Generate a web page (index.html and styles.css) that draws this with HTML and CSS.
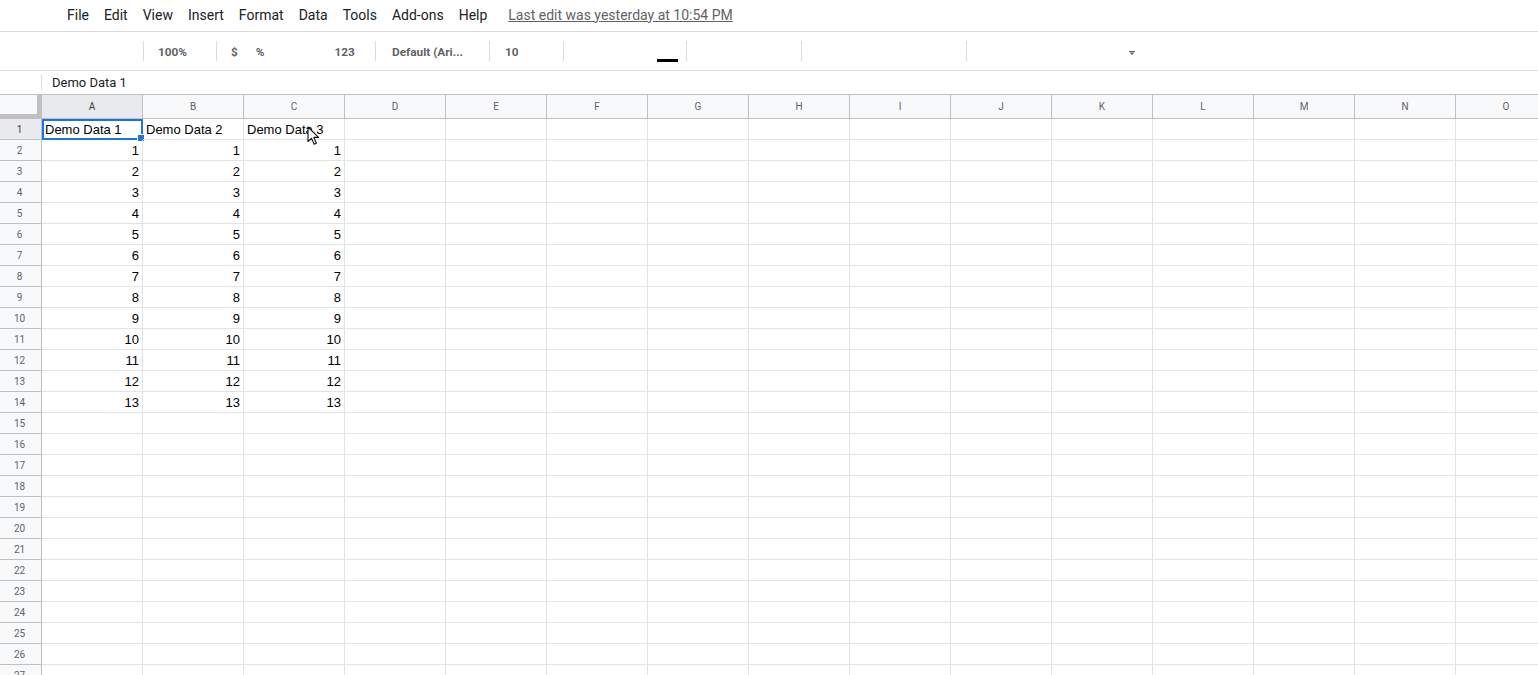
FILE: index.html
```html
<!DOCTYPE html>
<html lang="en">
<head>
    <meta charset="UTF-8">
    <title>Demo Data - Sheets</title>
    <link rel="stylesheet" href="styles.css">
</head>
<body>

    <div class="menubar">
        <span class="menu-item">File</span>
        <span class="menu-item">Edit</span>
        <span class="menu-item">View</span>
        <span class="menu-item">Insert</span>
        <span class="menu-item">Format</span>
        <span class="menu-item">Data</span>
        <span class="menu-item">Tools</span>
        <span class="menu-item">Add-ons</span>
        <span class="menu-item">Help</span>
        <span class="last-edit">Last edit was yesterday at 10:54 PM</span>
    </div>

    <div class="toolbar">
        <div class="tb-group tb-start"></div>
        <div class="tb-group tb-zoom"><span class="tb-text">100%</span></div>
        <div class="tb-group tb-format">
            <span class="tb-text">$</span>
            <span class="tb-text tb-pct">%</span>
            <span class="tb-text tb-num">123</span>
        </div>
        <div class="tb-group tb-font"><span class="tb-text">Default (Ari...</span></div>
        <div class="tb-group tb-size"><span class="tb-text">10</span></div>
        <div class="tb-group tb-style"><span class="text-color-bar"></span></div>
        <div class="tb-group tb-borders"></div>
        <div class="tb-group tb-align"></div>
        <div class="tb-group tb-last">
            <svg class="tb-caret" width="6" height="4" viewBox="0 0 6 4"><path d="M0 0h6v1H0z M0.5 1.5h5L3 4z" fill="#5f6368"/></svg>
        </div>
    </div>

    <div class="formula-bar">
        <div class="fx-spacer"></div>
        <div class="fx-input">Demo Data 1</div>
    </div>

    <div class="sheet" id="sheet">
        <div class="header-row" id="header-row">
            <div class="corner"></div>
        </div>
        <!-- rows built below -->
    </div>

    <svg class="mouse-cursor" width="14" height="20" viewBox="0 0 14 20">
        <path d="M1 1 L1 15.5 L4.5 12.3 L7.2 18.3 L9.4 17.3 L6.8 11.4 L11.5 11.4 Z" fill="#fff" stroke="#111" stroke-width="1.1" stroke-linejoin="round"/>
    </svg>

    <script>
        const letters = "ABCDEFGHIJKLMNO".split("");
        const headerRow = document.getElementById("header-row");
        letters.forEach((l, i) => {
            let cell = document.createElement("div");
            cell.className = "col-head" + (i === 0 ? " active" : "");
            cell.innerText = l;
            headerRow.appendChild(cell);
        });

        const sheet = document.getElementById("sheet");
        for (let r = 1; r <= 27; r++) {
            let row = document.createElement("div");
            row.className = "row";
            let head = document.createElement("div");
            head.className = "row-head" + (r === 1 ? " active" : "");
            head.innerText = r;
            row.appendChild(head);

            for (let c = 0; c < letters.length; c++) {
                let cell = document.createElement("div");
                cell.className = "cell";
                if (c < 3) {
                    if (r === 1) {
                        cell.innerText = "Demo Data " + (c + 1);
                    } else if (r <= 14) {
                        cell.innerText = r - 1;
                        cell.classList.add("num");
                    }
                }
                if (r === 1 && c === 0) {
                    let sel = document.createElement("div");
                    sel.className = "selection";
                    sel.innerHTML = '<span class="fill-handle"></span>';
                    cell.appendChild(sel);
                }
                row.appendChild(cell);
            }
            sheet.appendChild(row);
        }
    </script>

</body>
</html>
```

FILE: styles.css
```css
body {
    margin: 0;
    width: 1538px;
    height: 675px;
    overflow: hidden;
    background: #fff;
    font-family: Roboto, "Liberation Sans", Arial, sans-serif;
    color: #202124;
    position: relative;
}

/* menu */
.menubar {
    height: 32px;
    display: flex;
    align-items: center;
    gap: 15px;
    padding-left: 67px;
    padding-bottom: 2px;
    box-sizing: border-box;
    border-bottom: 1px solid #dadce0;
    font-size: 14px;
}
.menu-item {
    color: #202124;
}
.last-edit {
    margin-left: 6px;
    color: #5f6368;
    text-decoration: underline;
}

/* toolbar */
.toolbar {
    height: 38px;
    display: flex;
    align-items: center;
    border-bottom: 1px solid #dadce0;
}
.tb-group {
    height: 20px;
    display: flex;
    align-items: center;
    border-left: 1px solid #dadce0;
    box-sizing: border-box;
    flex: none;
    position: relative;
}
.tb-start { width: 143px; border-left: none; }
.tb-zoom { width: 73px; padding-left: 14px; }
.tb-format { width: 159px; padding-left: 14px; }
.tb-font { width: 114px; padding-left: 16px; }
.tb-size { width: 74px; padding-left: 15px; }
.tb-style { width: 123px; }
.tb-borders { width: 115px; }
.tb-align { width: 165px; }
.tb-last { width: 200px; }
.tb-text {
    font-size: 11.8px;
    font-weight: bold;
    color: #5f6368;
    padding-top: 1px;
}
.tb-pct { margin-left: 18px; }
.tb-num { margin-left: 70px; }
.text-color-bar {
    position: absolute;
    left: 93px;
    top: 18px;
    width: 21px;
    height: 3px;
    background: #000;
}
.tb-caret {
    position: absolute;
    left: 162px;
    top: 10px;
}

/* formula bar */
.formula-bar {
    height: 23px;
    display: flex;
    align-items: center;
}
.fx-spacer {
    width: 41px;
    height: 15px;
    border-right: 1px solid #dadce0;
}
.fx-input {
    padding-left: 10px;
    font-size: 13px;
    color: #202124;
}

/* grid */
.sheet {
    border-top: 1px solid #c0c0c0;
}
.header-row, .row {
    display: flex;
}
.header-row {
    height: 24px;
}
.corner {
    flex: none;
    width: 42px;
    height: 24px;
    box-sizing: border-box;
    background: #f8f9fa;
    border-right: 5px solid #c0c0c0;
    border-bottom: 5px solid #c0c0c0;
}
.col-head {
    flex: none;
    width: 101px;
    height: 24px;
    box-sizing: border-box;
    background: #f8f9fa;
    border-right: 1px solid #c0c0c0;
    border-bottom: 1px solid #c0c0c0;
    font-size: 10px;
    color: #5f6368;
    text-align: center;
    line-height: 23px;
}
.col-head.active, .row-head.active {
    background: #e8eaed;
    color: #3c4043;
}
.row-head {
    flex: none;
    width: 42px;
    height: 21px;
    box-sizing: border-box;
    background: #f8f9fa;
    border-right: 1px solid #c0c0c0;
    border-bottom: 1px solid #c0c0c0;
    font-size: 10px;
    color: #5f6368;
    text-align: center;
    line-height: 21px;
    padding-right: 2px;
}
.cell {
    flex: none;
    width: 101px;
    height: 21px;
    box-sizing: border-box;
    border-right: 1px solid #e2e3e3;
    border-bottom: 1px solid #e2e3e3;
    font-family: "Liberation Sans", Arial, sans-serif;
    font-size: 13px;
    line-height: 21px;
    color: #000;
    padding: 0 3px;
    white-space: nowrap;
    position: relative;
}
.cell.num {
    text-align: right;
}
.selection {
    position: absolute;
    top: 0;
    left: 0;
    width: 101px;
    height: 21px;
    box-sizing: border-box;
    border: 2px solid #1a73e8;
}
.fill-handle {
    position: absolute;
    right: -4px;
    bottom: -4px;
    width: 6px;
    height: 6px;
    background: #1a73e8;
    border: 1px solid #fff;
}

.mouse-cursor {
    position: absolute;
    left: 307px;
    top: 126px;
}
```
